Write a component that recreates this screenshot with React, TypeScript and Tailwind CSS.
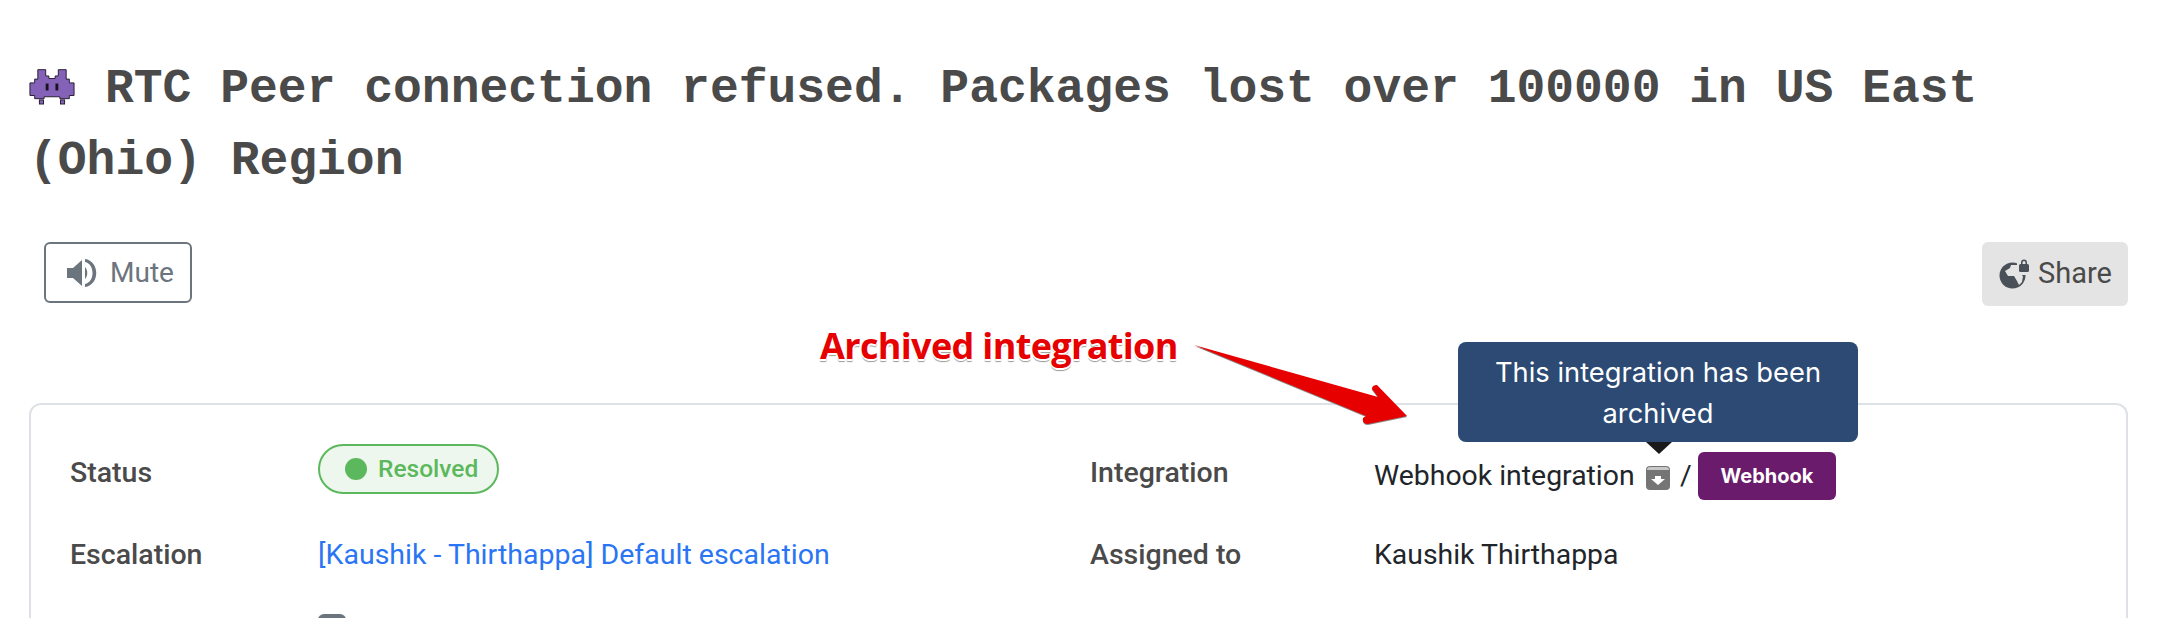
const mono = "font-['Liberation_Mono',monospace]"

function MuteIcon() {
  return (
    <svg viewBox="0 0 30 28" className="h-[28px] w-[30px] shrink-0" fill="#6c757d">
      <path d="M0 9h6l9-8v26l-9-8H0z" />
      <path d="M18 8c3 3 3 9 0 12z" />
      <path d="M18 0c15 2 15 26 0 28v-3c10-2 10-20 0-22z" />
    </svg>
  )
}

function ShareIcon() {
  return (
    <svg viewBox="0 0 30 30" className="h-[30px] w-[30px] shrink-0">
      <circle cx="13.500" cy="16.500" r="13" fill="#495057" />
      <path d="M12 6l-1 3-5 3 3 5h6l3 5 2 4 3-3 1-6-6-4 2-4-2-3z" fill="#e4e4e4" />
      <path d="M18 1h12v15H18z" fill="#e4e4e4" />
      <rect x="20" y="5" width="10" height="8" rx="1.500" fill="#495057" />
      <path d="M22 6V3.500a3 3 0 0 1 6 0V6h-1.500V3.500a1.500 1.500 0 0 0-3 0V6z" fill="#495057" />
    </svg>
  )
}

function Invader() {
  return (
    <svg viewBox="-0.3 -0.3 14.600 11.600" className="h-[38px] w-[46px] shrink-0">
      <path
        d="M2.500 0H5V2H6V2.800H8V2H9V0H11.500V3H12.500V4.200H14V8.200H12.500V9.200H9.500V8.600H4.500V9.200H1.500V8.200H0V4.200H1.500V3H2.500Z"
        fill="#8462b8"
        stroke="#231a2e"
        strokeWidth="0.3"
      />
      <rect x="3" y="9.600" width="1.300" height="1.300" fill="#8462b8" stroke="#231a2e" strokeWidth="0.3" />
      <rect x="9.700" y="9.600" width="1.300" height="1.300" fill="#8462b8" stroke="#231a2e" strokeWidth="0.3" />
      <rect x="5" y="4.400" width="0.900" height="2.200" fill="#17121d" />
      <rect x="8.100" y="4.400" width="0.900" height="2.200" fill="#17121d" />
    </svg>
  )
}

function ArchiveIcon() {
  return (
    <svg viewBox="0 0 24 24" className="mt-[4px] h-[24px] w-[24px] shrink-0">
      <rect width="24" height="24" rx="4" fill="#757575" />
      <path d="M1 4a3 3 0 0 1 3-3h16a3 3 0 0 1 3 3z" fill="#c8c8c8" />
      <path d="M9 10h6v3h4l-7 6-7-6h4z" fill="#fff" />
    </svg>
  )
}

function Label({ children }: { children: React.ReactNode }) {
  return <div className="shrink-0 text-[28.5px] font-medium leading-[38px] text-[#4a4a4a]">{children}</div>
}

export default function App() {
  return (
    <div className="h-[618px] overflow-hidden bg-white pl-[29px] pr-[30px] pt-[53px] font-['Roboto',sans-serif]">
      <h1 className={`${mono} text-[48px] font-bold leading-[72px] text-[#4a4a4a]`}>
        <span className="mr-[30px] inline-block align-[-4px]"><Invader /></span>
        RTC Peer connection refused. Packages lost over 100000 in US East (Ohio) Region
      </h1>

      <div className="mt-[45px] flex items-start justify-between">
        <button className="ml-[15px] flex h-[61px] w-[148px] items-center gap-[13px] rounded-[6px] border-2 border-[#6c757d] pl-[21px] text-[28px] text-[#6c757d]">
          <MuteIcon />
          Mute
        </button>
        <button className="flex h-[64px] w-[146px] items-center gap-[9px] rounded-[6px] bg-[#e4e4e4] pl-[17px] text-[29px] text-[#4a4a4a]">
          <ShareIcon />
          Share
        </button>
      </div>

      <div className="relative mt-[97px] h-[300px] rounded-[12px] border-2 border-[#dee2e6] pl-[39px] pt-[39px]">
        <div className="absolute left-[789px] top-[-83px] text-[36px] font-bold leading-[48px] tracking-[-0.65px] text-[#e60000] [font-family:'Open_Sans',sans-serif] [text-shadow:0_2px_0_#fff,2px_0_0_#fff,-2px_0_0_#fff,0_3px_1px_#999]">
          Archived integration
        </div>
        <svg viewBox="0 0 222 90" className="absolute left-[1159px] top-[-65px] h-[90px] w-[222px] drop-shadow-[0_1px_0_#888]">
          <path d="M4 5L188 57L182 49Q182 45 187 45L217 76L178 84Q172 84 173 78L176 76Z" fill="#e60000" />
        </svg>

        <div className="absolute left-[1427px] top-[-63px] flex h-[100px] w-[400px] items-center justify-center rounded-[8px] bg-[#2c4a74] px-[24px] pt-[2px] text-center font-['Inter',sans-serif] text-[27.3px] leading-[41px] text-white">
          This integration has been archived
        </div>
        <div className="absolute left-[1615px] top-[37px] h-0 w-0 border-x-[13px] border-t-[12px] border-x-transparent border-t-[#1a1a1a]" />

        <div className="grid grid-cols-[1020px_1fr] grid-rows-[56px_38px_38px] gap-y-[36px]">
          <div className="flex">
            <div className="w-[248px] pt-[10px]"><Label>Status</Label></div>
            <span className="flex h-[50px] w-[181px] items-center gap-[11px] rounded-full border-2 border-[#5cb85c] bg-[#eef7ee] pl-[25px] text-[24.5px] font-medium text-[#5cb85c]">
              <span className="h-[22px] w-[22px] rounded-full bg-[#5cb85c]" />
              Resolved
            </span>
          </div>
          <div className="flex">
            <div className="w-[284px] pt-[10px]"><Label>Integration</Label></div>
            <div className="mt-[8px] flex h-[48px] items-center text-[28.4px] text-[#212529]">
              <span className="w-[272px] shrink-0">Webhook integration</span>
              <ArchiveIcon />
              <span className="ml-[10px] w-[18px]">/</span>
              <span className="flex h-[48px] w-[138px] items-center justify-center rounded-[6px] bg-[#6a1b6b] font-['Inter',sans-serif] text-[20px] font-bold text-white">Webhook</span>
            </div>
          </div>
          <div className="flex">
            <div className="w-[248px]"><Label>Escalation</Label></div>
            <span className="text-[28.5px] leading-[38px] text-[#2a75f3]">[Kaushik - Thirthappa] Default escalation</span>
          </div>
          <div className="flex">
            <div className="w-[284px]"><Label>Assigned to</Label></div>
            <span className="text-[28.4px] leading-[38px] text-[#212529]">Kaushik Thirthappa</span>
          </div>
          <div className="pl-[248px] pt-[4px]">
            <div className="h-[28px] w-[28px] rounded-[6px] bg-[#6c757d]" />
          </div>
        </div>
      </div>
    </div>
  )
}
